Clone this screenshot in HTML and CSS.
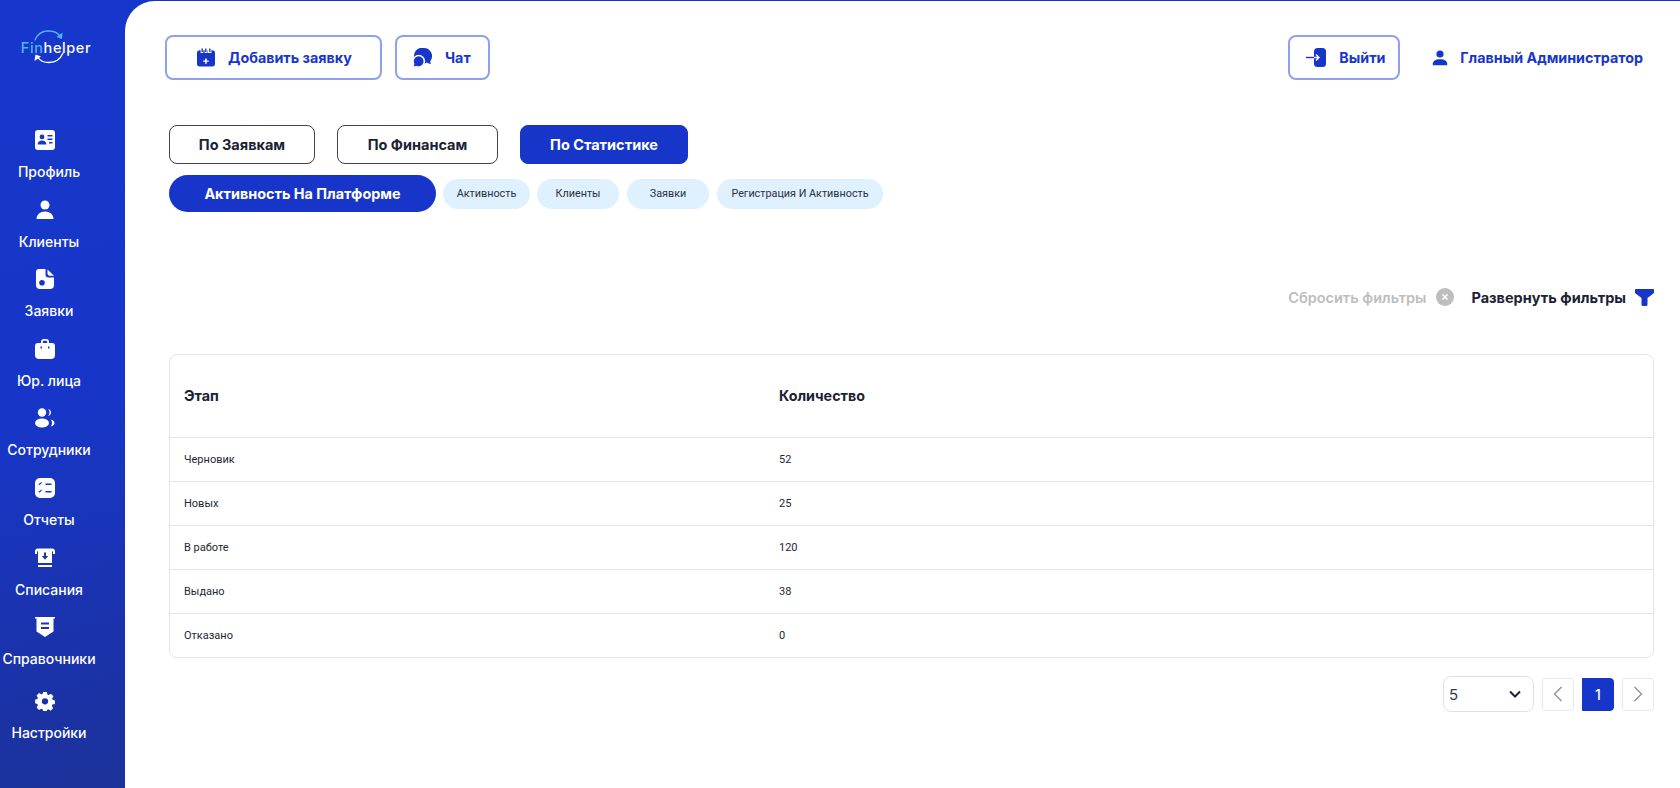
FILE: index.html
```html
<!DOCTYPE html>
<html lang="ru">
<head>
  <meta charset="UTF-8">
  <meta name="viewport" content="width=device-width, initial-scale=1.0">
  <title>Finhelper</title>
  <link rel="stylesheet" href="styles.css">
</head>
<body>
  <div class="app">
    <aside class="sidebar">
      <div class="logo">
        <svg class="logo-arcs" width="32" height="34" viewBox="0 0 32 34" fill="none" stroke-width="1.3" stroke-linecap="round">
          <path d="M2 10 C5 3 10 1 15 1 C21 1 25 3 27 6" stroke="#4db4f5"/>
          <path d="M29.500 2.500 L29 9 L23.500 7 Z" fill="#4db4f5" stroke="none"/>
          <path d="M30 23 C27 30 22 32.500 16 32.500 C11 32.500 7 31 5 27.500" stroke="#fff"/>
          <path d="M1.500 31 L2.500 24.500 L8 26.500 Z" fill="#fff" stroke="none"/>
        </svg>
        <span class="logo-text"><span class="logo-fin">Fin</span>helper</span>
      </div>
      <nav class="nav">
        <a class="nav-item">
          <svg width="20" height="20" viewBox="0 0 20 20"><path fill="#fff" fill-rule="evenodd" d="M3 0h14a3 3 0 0 1 3 3v14a3 3 0 0 1-3 3H3a3 3 0 0 1-3-3V3a3 3 0 0 1 3-3Zm4 4.500a2.400 2.400 0 1 0 0 4.800 2.400 2.400 0 0 0 0-4.800ZM2.600 14.500h8.800c0-2.600-2-4-4.400-4s-4.400 1.400-4.400 4ZM12.500 5v1.500h5V5Zm0 3.500V10h5V8.500Zm1.500 3.500v1.500h3.500V12Z"/></svg>
          <span>Профиль</span>
        </a>
        <a class="nav-item">
          <svg width="20" height="20" viewBox="0 0 20 20"><circle cx="10" cy="5" r="4.500" fill="#fff"/><path fill="#fff" d="M1.500 19c0-4.500 3.800-7.500 8.500-7.500s8.500 3 8.500 7.500Z"/></svg>
          <span>Клиенты</span>
        </a>
        <a class="nav-item">
          <svg width="20" height="20" viewBox="0 0 20 20"><path fill="#fff" fill-rule="evenodd" d="M4 0h6.500v5.500A3 3 0 0 0 13.500 8.500H19V16a4 4 0 0 1-4 4H5a4 4 0 0 1-4-4V3a3 3 0 0 1 3-3Zm3 11a2.800 2.800 0 1 0 0 5.600 2.800 2.800 0 0 0 0-5.600Z"/><path fill="#fff" d="M12.500 0.500 19 6.800h-4a2.500 2.500 0 0 1-2.500-2.500Z"/></svg>
          <span>Заявки</span>
        </a>
        <a class="nav-item">
          <svg width="20" height="20" viewBox="0 0 20 20"><path fill="#fff" fill-rule="evenodd" d="M6 4V3a3 3 0 0 1 3-3h2a3 3 0 0 1 3 3v1h3a3 3 0 0 1 3 3v9a4 4 0 0 1-4 4H4a4 4 0 0 1-4-4V7a3 3 0 0 1 3-3Zm1.800 0h4.400V3A1.200 1.200 0 0 0 11 1.800H9A1.200 1.200 0 0 0 7.800 3ZM5.500 7.500v2h1.500v-2Zm7.500 0v2h1.500v-2Z"/></svg>
          <span>Юр. лица</span>
        </a>
        <a class="nav-item">
          <svg width="20" height="20" viewBox="0 0 20 20"><circle cx="7" cy="4.500" r="4.200" fill="#fff"/><ellipse cx="7" cy="15" rx="7" ry="4.500" fill="#fff"/><path fill="#fff" d="M13 1c2 .3 3 1.800 3 3.500S15 7.700 13 8c1-1 1.500-2.200 1.500-3.500S14 2 13 1Zm2.500 10.500c2.500.5 4 1.800 4 3.500s-1.500 3-4 3.500c1-1 1.500-2.200 1.500-3.500s-.5-2.500-1.500-3.500Z"/></svg>
          <span>Сотрудники</span>
        </a>
        <a class="nav-item">
          <svg width="20" height="20" viewBox="0 0 20 20"><path fill="#fff" fill-rule="evenodd" d="M5 0h10a5 5 0 0 1 5 5v10a5 5 0 0 1-5 5H5a5 5 0 0 1-5-5V5a5 5 0 0 1 5-5Zm5.500 5.500v1.600h6V5.500Zm0 7.500v1.600h6V13ZM3.500 6l1 1.300L7 4.800l-.8-.8-1.700 1.700-.3-.5Zm0 7.500 1 1.300 2.500-2.500-.8-.8-1.700 1.700-.3-.5Z"/></svg>
          <span>Отчеты</span>
        </a>
        <a class="nav-item">
          <svg width="20" height="20" viewBox="0 0 20 20"><path fill="#fff" fill-rule="evenodd" d="M3 .500h14a3 3 0 0 1 3 3V6h-2V4.500a1.500 1.500 0 0 0-1-1.400V15H3V3.100A1.500 1.500 0 0 0 2 4.500V6H0V3.500a3 3 0 0 1 3-3ZM9 4.500V8H6.800l3.200 3.800L13.200 8H11V4.500ZM3 17h14v2H3Z"/></svg>
          <span>Списания</span>
        </a>
        <a class="nav-item">
          <svg width="20" height="20" viewBox="0 0 20 20"><path fill="#fff" fill-rule="evenodd" d="M0 0h20v1.600h-1.500V14.500L10 20l-8.500-5.500V1.600H0ZM6 5.500v2h8v-2Zm0 4.500v2h8v-2Z"/></svg>
          <span>Справочники</span>
        </a>
        <a class="nav-item nav-settings">
          <svg width="20" height="20" viewBox="0 0 20 20"><path fill="#fff" fill-rule="evenodd" d="M8 0h4l.6 2.800 1.500.7 2.500-1.500 2.800 2.800-1.500 2.500.6 1.500 2.500.7v4l-2.800.6-.6 1.500 1.500 2.500-2.800 2.800-2.500-1.500-1.500.6L12 22H8l-.6-2.700-1.500-.6-2.500 1.500-2.800-2.800 1.500-2.500-.6-1.500L-1 12.700v-4l2.500-.7.600-1.500L.6 4l2.800-2.800 2.500 1.500 1.500-.7ZM10 7a3.500 3.500 0 1 0 0 7 3.500 3.500 0 0 0 0-7Z" transform="translate(1 .9) scale(.9)"/></svg>
          <span>Настройки</span>
        </a>
      </nav>
    </aside>

    <main class="main">
      <header class="topbar">
        <div class="topbar-group">
          <button class="top-button add-button">
            <svg width="18" height="19" viewBox="0 0 20 20"><path fill="#1736c9" fill-rule="evenodd" d="M5 0h1.500v4H5Zm4 0h1.500v4H9Zm4.500 0H15v4h-1.500ZM3 2h1v3h3V2h1.500v3h3V2H12v3h4V2h1a3 3 0 0 1 3 3v12a3 3 0 0 1-3 3H3a3 3 0 0 1-3-3V5a3 3 0 0 1 3-3Zm6 9v2.200H6.800v1.600H9V17h1.800v-2.200H13v-1.600h-2.200V11Z"/></svg>
            Добавить заявку
          </button>
          <button class="top-button chat-button">
            <svg width="19" height="19" viewBox="0 0 20 20"><path fill="#1736c9" d="M11.500 0a8.500 8.500 0 0 1 7 13.300c-.5 1-.2 2.200.5 3.200-1.500.2-3-.3-4.500-1.300A8.500 8.500 0 1 1 11.500 0Z"/><circle cx="6" cy="14" r="6.800" fill="#fff"/><path fill="#1736c9" d="M6 8.800a5.200 5.200 0 1 1-2.300 9.900L.8 19.500l.7-2.900A5.200 5.200 0 0 1 6 8.800Z"/></svg>
            Чат
          </button>
        </div>
        <div class="topbar-group">
          <button class="top-button logout-button">
            <svg width="20" height="19" viewBox="0 0 20 19"><rect x="8" y="0" width="12" height="19" rx="3.500" fill="#1736c9"/><path d="M0 9.500h8" stroke="#1736c9" stroke-width="1.400"/><path d="M8 9.500h5m-3-3 3 3-3 3" fill="none" stroke="#fff" stroke-width="1.400"/></svg>
            Выйти
          </button>
          <div class="user">
            <svg width="16" height="16" viewBox="0 0 20 20"><circle cx="10" cy="5" r="4.500" fill="#1736c9"/><path fill="#1736c9" d="M1 19v-2c0-3 3-5.500 9-5.500s9 2.500 9 5.500v2Z"/></svg>
            Главный Администратор
          </div>
        </div>
      </header>

      <section class="content">
        <div class="tabs">
          <button class="tab">По Заявкам</button>
          <button class="tab">По Финансам</button>
          <button class="tab tab-active">По Статистике</button>
        </div>

        <div class="pills">
          <button class="pill pill-main">Активность На Платформе</button>
          <button class="pill pill-activity">Активность</button>
          <button class="pill pill-short">Клиенты</button>
          <button class="pill pill-short">Заявки</button>
          <button class="pill pill-reg">Регистрация И Активность</button>
        </div>

        <div class="filters">
          <span class="filter-reset">Сбросить фильтры</span>
          <svg class="filter-reset-icon" width="18" height="18" viewBox="0 0 18 18"><circle cx="9" cy="9" r="9" fill="#bdbdbd"/><path d="M6.500 6.500l5 5m0-5l-5 5" stroke="#fff" stroke-width="1.500"/></svg>
          <span class="filter-open">Развернуть фильтры</span>
          <svg width="19" height="17" viewBox="0 0 19 17"><path fill="#1736c9" d="M1 0h17a1 1 0 0 1 1 1v2.500a1 1 0 0 1-.3.700L12.500 9v6.500a1.500 1.500 0 0 1-1.500 1.500H8a1.500 1.500 0 0 1-1.500-1.500V9L.3 4.200A1 1 0 0 1 0 3.500V1a1 1 0 0 1 1-1Z"/></svg>
        </div>

        <div class="table-wrap">
          <table class="stats-table">
            <thead>
              <tr><th class="col-stage">Этап</th><th>Количество</th></tr>
            </thead>
            <tbody>
              <tr><td>Черновик</td><td>52</td></tr>
              <tr><td>Новых</td><td>25</td></tr>
              <tr><td>В работе</td><td>120</td></tr>
              <tr><td>Выдано</td><td>38</td></tr>
              <tr><td>Отказано</td><td>0</td></tr>
            </tbody>
          </table>
        </div>

        <div class="pagination">
          <div class="page-size">
            <span>5</span>
            <svg width="12" height="8" viewBox="0 0 12 8" fill="none"><path d="M1 1.500l5 5 5-5" stroke="#1a2340" stroke-width="2"/></svg>
          </div>
          <button class="page-button">
            <svg width="10" height="16" viewBox="0 0 10 16" fill="none"><path d="M8.500 1L1.500 8l7 7" stroke="#8a8f9a" stroke-width="1.300"/></svg>
          </button>
          <button class="page-button page-current">1</button>
          <button class="page-button">
            <svg width="10" height="16" viewBox="0 0 10 16" fill="none"><path d="M1.500 1l7 7-7 7" stroke="#8a8f9a" stroke-width="1.300"/></svg>
          </button>
        </div>
      </section>
    </main>
  </div>
</body>
</html>
```

FILE: styles.css
```css
/* General reset */
* {
  margin: 0;
  padding: 0;
  box-sizing: border-box;
}

body {
  font-family: Inter, "Noto Sans", Arial, sans-serif;
  color: #1a2233;
  background-color: #fff;
  overflow: hidden;
}

button {
  font-family: inherit;
  cursor: pointer;
  background: none;
  border: none;
}

.app {
  display: flex;
  height: 788px;
  padding-top: 1px;
  background-color: #1736c9;
}

/* Sidebar */
.sidebar {
  flex: 0 0 125px;
  width: 125px;
  margin-top: -1px;
  padding-top: 1px;
  background: linear-gradient(165deg, #1736cb 0%, #1736c9 50%, #1c3199 100%);
}

.logo {
  display: flex;
  align-items: center;
  justify-content: center;
  width: 98px;
  height: 64px;
  margin-top: 15px;
  margin-left: 7px;
  position: relative;
}

.logo-arcs {
  position: absolute;
  left: 26px;
  top: 14px;
}

.logo-text {
  font-size: 14.500px;
  font-weight: 500;
  letter-spacing: .6px;
  color: #fff;
  margin-top: -2px;
}

.logo-fin {
  color: #4db4f5;
}

.nav {
  display: flex;
  flex-direction: column;
  margin-top: 50px;
}

.nav-item {
  display: flex;
  flex-direction: column;
  align-items: center;
  width: 98px;
  height: 69.600px;
  color: #fff;
  font-size: 14px;
  font-weight: 500;
  line-height: 18px;
  white-space: nowrap;
}

.nav-item svg {
  margin-right: 8px;
  margin-bottom: 13px;
  flex-shrink: 0;
}

.nav-settings {
  margin-top: 4px;
}

/* Main area */
.main {
  flex: 1;
  background-color: #fff;
  border-top-left-radius: 30px;
  padding: 34px 26px 0 40px;
}

.topbar {
  display: flex;
  justify-content: space-between;
  align-items: center;
}

.topbar-group {
  display: flex;
  align-items: center;
}

.top-button {
  display: flex;
  align-items: center;
  height: 45px;
  border: 2px solid #8fa1ee;
  border-radius: 8px;
  color: #1736c9;
  font-size: 14.300px;
  font-weight: 700;
  white-space: nowrap;
}

.add-button {
  width: 217px;
  gap: 13px;
  padding-left: 30px;
  margin-right: 13px;
}

.chat-button {
  width: 95px;
  gap: 13px;
  padding-left: 16px;
}

.logout-button {
  width: 112px;
  gap: 13px;
  padding-left: 16px;
}

.user {
  display: flex;
  align-items: center;
  gap: 12px;
  margin-left: 32px;
  margin-right: 11px;
  color: #1736c9;
  font-size: 14.300px;
  font-weight: 700;
  white-space: nowrap;
}

.content {
  margin-left: 4px;
  margin-top: 45px;
}

/* Tabs */
.tabs {
  display: flex;
  gap: 22px;
}

.tab {
  height: 39px;
  width: 146px;
  border: 1px solid #3f4450;
  border-radius: 8px;
  font-size: 14.500px;
  font-weight: 700;
  color: #1a2233;
}

.tab:nth-child(2) {
  width: 161px;
}

.tab-active {
  width: 168px;
  background-color: #1736c9;
  border-color: #1736c9;
  color: #fff;
}

/* Pills */
.pills {
  display: flex;
  align-items: center;
  margin-top: 11px;
}

.pill {
  height: 30px;
  border-radius: 15px;
  background-color: #dff0fe;
  color: #2a303c;
  font-family: Roboto, Arial, sans-serif;
  font-size: 10.800px;
  font-weight: 400;
  white-space: nowrap;
}

.pill-main {
  width: 267px;
  height: 37px;
  border-radius: 19px;
  background-color: #1736c9;
  color: #fff;
  font-family: Inter, "Noto Sans", Arial, sans-serif;
  font-size: 14.400px;
  font-weight: 700;
  margin-right: 7px;
}

.pill-activity {
  width: 87px;
  margin-right: 7px;
}

.pill-short {
  width: 82px;
  margin-right: 8px;
}

.pill-reg {
  width: 166px;
}

/* Filters */
.filters {
  display: flex;
  justify-content: flex-end;
  align-items: center;
  height: 20px;
  margin-top: 75px;
}

.filter-reset {
  color: #bdbdbd;
  font-size: 14.500px;
  font-weight: 600;
}

.filter-reset-icon {
  margin-left: 10px;
}

.filter-open {
  color: #1a2233;
  font-size: 14.500px;
  font-weight: 700;
  margin-left: 17px;
  margin-right: 9px;
}

/* Table */
.table-wrap {
  margin-top: 47px;
  border: 1px solid #e3e5e8;
  border-radius: 8px;
  overflow: hidden;
}

.stats-table {
  width: 100%;
  border-collapse: collapse;
  table-layout: fixed;
}

.stats-table th {
  height: 82px;
  padding-left: 14px;
  text-align: left;
  font-size: 14.300px;
  font-weight: 700;
  color: #1a2233;
}

.col-stage {
  width: 595px;
}

.stats-table td {
  height: 44px;
  padding-left: 14px;
  padding-top: 1px;
  border-top: 1px solid #e3e5e8;
  font-family: Roboto, Arial, sans-serif;
  font-size: 11px;
  color: #222833;
}

/* Pagination */
.pagination {
  display: flex;
  justify-content: flex-end;
  align-items: center;
  gap: 8px;
  margin-top: 18px;
}

.page-size {
  display: flex;
  justify-content: space-between;
  align-items: center;
  width: 91px;
  height: 36px;
  padding: 0 12px 0 5px;
  border: 1px solid #dfe1e4;
  border-radius: 8px;
  font-size: 15px;
  color: #333b4a;
}

.page-button {
  display: flex;
  justify-content: center;
  align-items: center;
  width: 32px;
  height: 33px;
  border: 1px solid #e8e9ec;
  border-radius: 4px;
}

.page-current {
  background-color: #1736c9;
  border-color: #1736c9;
  border-radius: 0 4px 4px 0;
  color: #fff;
  font-size: 14px;
  font-weight: 500;
}
```
